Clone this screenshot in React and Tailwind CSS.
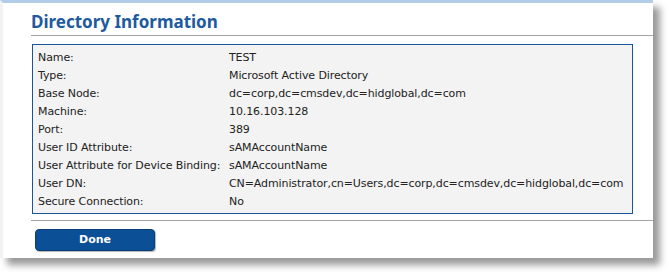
const rows = [
  ['Name:', 'TEST'],
  ['Type:', 'Microsoft Active Directory'],
  ['Base Node:', 'dc=corp,dc=cmsdev,dc=hidglobal,dc=com'],
  ['Machine:', '10.16.103.128'],
  ['Port:', '389'],
  ['User ID Attribute:', 'sAMAccountName'],
  ['User Attribute for Device Binding:', 'sAMAccountName'],
  ['User DN:', 'CN=Administrator,cn=Users,dc=corp,dc=cmsdev,dc=hidglobal,dc=com'],
  ['Secure Connection:', 'No'],
];

export default function App() {
  return (
    <div className="h-[275px] w-[669px] bg-white font-['DejaVu_Sans',Verdana,sans-serif]">
      <div className="flex h-[258px] w-[653px] flex-col border-t-[3px] border-l-[3px] border-t-[#b3cde8] border-l-[#f2f2f2] bg-white pl-[28px] shadow-[7px_7px_7px_rgba(0,0,0,0.4)]">
        <div className="h-[33px] border-b border-[#a6a6a6] pt-[9px]">
          <h1 className="font-['Noto_Sans',sans-serif] text-[17px] font-bold leading-[20px] text-[#1d5a9e]">
            Directory Information
          </h1>
        </div>
        <div className="mr-[20px] ml-[1px] mt-[8px] border border-[#1a5599] bg-[#f3f3f3] pt-[4px] pb-[2px] pl-[5px]">
          {rows.map(([label, value]) => (
            <div key={label} className="flex text-[11px] leading-[18px] tracking-[-0.1px] text-[#222]">
              <span className="w-[191px] shrink-0">{label}</span>
              <span className="whitespace-nowrap">{value}</span>
            </div>
          ))}
        </div>
        <div className="mt-[6px] border-t border-[#a6a6a6]" />
        <div className="mt-[5px] pl-[4px]">
          <button
            type="button"
            className="h-[22px] w-[120px] rounded-[4px] border border-[#083d78] bg-[#0b4f97] text-[11px] font-bold text-white shadow-[1px_1px_1px_rgba(0,0,0,0.3)]"
          >
            Done
          </button>
        </div>
      </div>
    </div>
  );
}
